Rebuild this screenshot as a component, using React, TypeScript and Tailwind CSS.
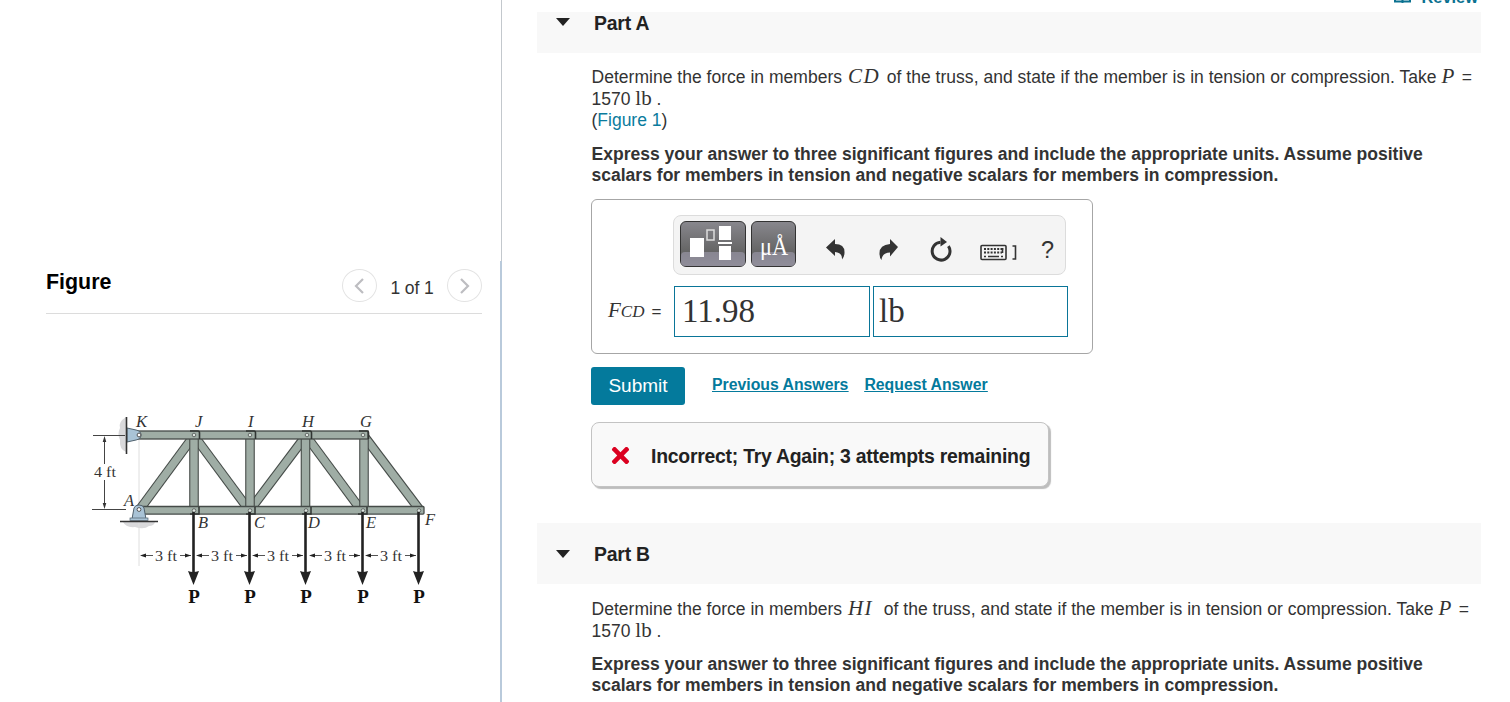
import type { ReactNode } from "react";
import { FaTimes } from "react-icons/fa";

const joints = [
  { x: 194, name: "B" },
  { x: 250, name: "C" },
  { x: 306, name: "D" },
  { x: 363, name: "E" },
  { x: 419, name: "F" },
];

const diagonals = [
  [140, 509, 193, 437],
  [195, 437, 249, 510],
  [250, 510, 305, 437],
  [307, 437, 361, 510],
  [364, 436, 419, 509],
];

const verticals = [194, 250, 305.5, 364];

function Beam({ x1, y1, x2, y2 }: { x1: number; y1: number; x2: number; y2: number }) {
  return (
    <g>
      <line x1={x1} y1={y1} x2={x2} y2={y2} stroke="#454b48" strokeWidth="9.6" />
      <line x1={x1} y1={y1} x2={x2} y2={y2} stroke="#9fada5" strokeWidth="7.4" />
    </g>
  );
}

function Truss() {
  return (
    <svg
      className="block h-[205px] w-[360px] font-['Liberation_Serif',serif]"
      viewBox="85 405 360 205"
    >
      {/* supports */}
      <path d="M126 417q-8 5-6 11-3 6 0 12-1 9 6 12z" fill="#d9d9db" />
      <path d="M123 522q3 6 12 5 9 3 14-1 5 0 6-4z" fill="#d9d9db" />
      <line x1="139" y1="440" x2="139" y2="566" stroke="#dedede" />

      {/* members */}
      {diagonals.map(([x1, y1, x2, y2]) => (
        <Beam key={x1} x1={x1} y1={y1} x2={x2} y2={y2} />
      ))}
      {verticals.map((x) => (
        <Beam key={x} x1={x} y1={436} x2={x} y2={508} />
      ))}
      <rect x="138" y="431" width="230" height="8" fill="#9fada5" stroke="#454b48" strokeWidth="1.3" />
      <rect x="138" y="506.5" width="286" height="7.6" rx="1" fill="#9fada5" stroke="#454b48" strokeWidth="1.3" />
      {[199, 255, 311, 368].map((x) => (
        <path key={x} d={`M${x - 9} 431h8q1.500 0 1.500 2v6`} fill="none" stroke="#303532" strokeWidth="1.600" />
      ))}
      {[199, 255, 311, 367].map((x) => (
        <path key={x} d={`M${x} 507v7h-9`} fill="none" stroke="#303532" strokeWidth="1.500" />
      ))}
      {[194, 250, 307, 363].map((x) => (
        <circle key={x} cx={x} cy="435" r="1.800" fill="#dfe5e1" stroke="#59605c" strokeWidth=".9" />
      ))}
      {joints.map((j) => (
        <circle key={j.name} cx={j.x} cy="510.5" r="1.800" fill="#dfe5e1" stroke="#59605c" strokeWidth=".9" />
      ))}

      <path d="M127 428l9 2q5 1 5 5t-5 5l-9 2z" fill="#a9c3d6" stroke="#51626e" />
      <line x1="126.500" y1="417" x2="126.500" y2="454" stroke="#333" strokeWidth="1.600" />
      <circle cx="139" cy="435" r="1.900" fill="#fff" stroke="#444" strokeWidth=".9" />
      <path d="M132 519l2-11q1-3 5-3t5 3l2 11z" fill="#a9c3d6" stroke="#51626e" />
      <rect x="130" y="518" width="18" height="2.500" fill="#a9c3d6" stroke="#51626e" strokeWidth=".7" />
      <line x1="120" y1="521.500" x2="158" y2="521.500" stroke="#333" strokeWidth="1.500" />
      <circle cx="139" cy="509.500" r="1.900" fill="#fff" stroke="#444" strokeWidth=".9" />

      {/* height dimension */}
      <path d="M93 435.500h32M92 509.500h34" stroke="#444" fill="none" />
      <path d="M104.500 438v26M104.500 480v27" stroke="#444" fill="none" />
      <path d="M104.500 436l-1.800 6h3.600zM104.500 509l-1.800-6h3.600z" fill="#333" />
      <text x="94" y="477" fontSize="14.500" fill="#333" textLength="22" lengthAdjust="spacingAndGlyphs">
        4 ft
      </text>

      {/* loads */}
      {joints.map((j, i) => (
        <g key={j.name}>
          <line x1={j.x - 0.5} y1="512" x2={j.x - 0.5} y2="576" stroke="#222" strokeWidth="2.600" />
          <path d={`M${j.x - 6} 571q5 2 11 0l-5.500 14z`} fill="#222" />
          <text x={j.x} y="603" fontSize="19" fontWeight="bold" textAnchor="middle" fill="#111">
            P
          </text>
          <path d={`M${j.x - 52} 555.500h11M${j.x - 14} 555.500h11`} stroke="#555" />
          <path
            d={`M${j.x - 54} 555.500l6-2v4zM${j.x - 3} 555.500l-6-2v4z`}
            fill="#222"
          />
          <text x={i === 0 ? 155 : j.x - 39} y="561" fontSize="15.500" fill="#333" textLength="22" lengthAdjust="spacingAndGlyphs">
            3 ft
          </text>
        </g>
      ))}

      {/* joint names */}
      <g fontSize="16.500" fontStyle="italic" fill="#333">
        <text x="136" y="427">K</text>
        <text x="195" y="427">J</text>
        <text x="248" y="427">I</text>
        <text x="302" y="427">H</text>
        <text x="360" y="427">G</text>
        <text x="124" y="506">A</text>
        <text x="198" y="528">B</text>
        <text x="254" y="528">C</text>
        <text x="308" y="528">D</text>
        <text x="366" y="528">E</text>
        <text x="425" y="525">F</text>
      </g>
    </svg>
  );
}

function PageButton({ next }: { next?: boolean }) {
  return (
    <button className="flex h-[33px] w-[35px] items-center justify-center rounded-[50%] border border-[#e3e3e3]">
      <svg className="h-4 w-3" viewBox="0 0 12 16" fill="none" stroke="#bdbdc1" strokeWidth="2.200">
        <path d={next ? "M2 1l7 7-7 7" : "M9 1L2 8l7 7"} />
      </svg>
    </button>
  );
}

function Var({ children }: { children: ReactNode }) {
  return (
    <span className="font-['Liberation_Serif',serif] text-[21px] leading-none tracking-[1.500px] italic">
      {children}
    </span>
  );
}

function PartTitle({ children }: { children: ReactNode }) {
  return (
    <>
      <svg className="mr-6 h-2 w-[14px]" viewBox="0 0 14 8">
        <path d="M0 0h14L7 8z" fill="#222" />
      </svg>
      <h2 className="pt-px text-[19.400px] leading-6 font-bold tracking-[-0.200px] text-[#222]">{children}</h2>
    </>
  );
}

function Question({ member, memberClass }: { member: string; memberClass: string }) {
  return (
    <>
      <div className="flex h-[22px] items-baseline text-[17.500px] leading-[22px] tracking-[0.020px] whitespace-pre">
        <span>Determine the force in members </span>
        <span className={memberClass}>
          <Var>{member}</Var>
        </span>
        <span> of the truss, and state if the member is in tension or compression. Take </span>
        <Var>P</Var>
        <span className="pl-px"> =</span>
      </div>
      <div className="h-[21px] text-[17.500px] leading-[21px]">
        1570 <span className="font-['Liberation_Serif',serif] text-[21px] leading-none">lb</span> .
      </div>
    </>
  );
}

function Instructions() {
  return (
    <p className="text-[17.540px] leading-[21px] font-bold whitespace-nowrap">
      Express your answer to three significant figures and include the appropriate units. Assume positive
      <br />
      scalars for members in tension and negative scalars for members in compression.
    </p>
  );
}

function Toolbar() {
  return (
    <div className="ml-[-1px] flex h-[60px] w-[393px] rounded-lg border border-[#dcdcdc] bg-[#f4f4f4] pt-[5px] pl-1.5">
      <button className="h-[46px] w-[66px] rounded-md border border-[#333] bg-linear-to-b from-[#88878d] from-0% via-[#656565] via-67% to-[#88878d] to-100%">
        <svg className="h-11 w-16" viewBox="0 0 64 44">
          <rect width="64" height="14" y="30" rx="4" fill="#918f9c" fillOpacity=".8" />
          <rect x="9" y="16" width="14" height="19" fill="#fff" />
          <rect x="26" y="8" width="7" height="10" fill="none" stroke="#ddd" strokeWidth="1.500" />
          <path d="M38 4h12v14H38zM37 20h14v2H37zM38 24h12v14H38z" fill="#fff" />
        </svg>
      </button>
      <button className="ml-[5px] h-[46px] w-[45px] rounded-md border border-[#333] bg-linear-to-b from-[#88878d] from-0% via-[#656565] via-67% to-[#88878d] to-100%">
        <svg className="h-11 w-[43px] font-['Liberation_Serif',serif]" viewBox="0 0 43 44">
          <rect width="43" height="14" y="30" rx="4" fill="#918f9c" fillOpacity=".8" />
          <text x="8" y="33" fontSize="25" fill="#fff" textLength="28" lengthAdjust="spacingAndGlyphs">
            μÅ
          </text>
        </svg>
      </button>
      <svg className="h-[46px] w-[260px] font-['Liberation_Sans',sans-serif]" viewBox="796 221 260 46">
        <path d="M826 247.500l9-8.500v5q10 0 9.500 9-.2 4-2.500 6.500.5-7-7-7.500v4z" fill="#333" />
        <path d="M898 247l-8-8v5q-11 1-10.500 10 .1 4 2 6 .5-7 8.500-7.500v4z" fill="#333" />
        <path d="M940.500 242.300a8.900 8.900 0 1 0 7.900 3.800" fill="none" stroke="#333" strokeWidth="3" />
        <path d="M940.500 237l6.500 5-6.500 4.500z" fill="#333" />
        <rect x="981" y="245.500" width="25" height="14" rx="1" fill="none" stroke="#333" strokeWidth="1.600" />
        <path
          d="M984 249h20M984 252.500h18"
          fill="none"
          stroke="#333"
          strokeWidth="1.800"
          strokeDasharray="2 1.300"
        />
        <path d="M984 256.500h2M988 256.500h11M1001 256.500h2M1002.500 248v5" stroke="#333" strokeWidth="1.600" />
        <path d="M1012.500 246h3v13h-3" fill="none" stroke="#333" strokeWidth="1.600" />
        <text x="1041" y="257.500" fontSize="23.500" fill="#333">
          ?
        </text>
      </svg>
    </div>
  );
}

function AnswerBox() {
  return (
    <div className="mt-[13px] ml-[-0.500px] flex h-[155px] w-[502px] rounded-md border border-[#a6a6a6]">
      <div className="flex w-[82px] items-baseline pt-[95px] pl-4 font-['Liberation_Serif',serif] text-[#333]">
        <span className="text-[21px] italic">F</span>
        <span className="pt-0.5 text-[17px] italic">CD</span>
        <span className="ml-[7px] font-['Liberation_Sans',sans-serif] text-[17px]">=</span>
      </div>
      <div className="pt-[15px]">
        <Toolbar />
        <div className="mt-[11px] flex gap-[3px] font-['Liberation_Serif',serif] text-[33px] leading-[49px] text-[#333]">
          <div className="h-[51px] w-[196px] border border-[#0a7598] pl-[7px]">11.98</div>
          <div className="h-[51px] w-[195px] border border-[#0a7598] pl-[5px]">lb</div>
        </div>
      </div>
    </div>
  );
}

export default function App() {
  return (
    <div className="flex h-[702px] w-[1510px] overflow-hidden bg-white font-['Liberation_Sans',sans-serif] text-[#333]">
      {/* FIGURE */}
      <aside className="flex w-[502px] flex-col">
        <div className="h-[261px] border-r border-[#c3c8cd]" />
        <div className="flex-1 border-r-2 border-[#b9cadb]">
          <div className="ml-[46px] flex h-[53px] w-[436px] border-b border-[#dcdcdc]">
            <h1 className="pt-[7px] text-[21.400px] leading-7 font-bold text-black">Figure</h1>
            <div className="ml-auto flex pt-2">
              <PageButton />
              <span className="w-[70px] pt-[7px] text-center text-[17.500px] leading-6 tracking-[-0.100px]">1 of 1</span>
              <PageButton next />
            </div>
          </div>
          <div className="mt-[91px] ml-[85px]">
            <Truss />
          </div>
        </div>
      </aside>

      {/* QUESTIONS */}
      <main className="ml-[35px] w-[944px]">
        <div className="flex h-3 justify-end text-[16.400px] leading-5 font-bold text-[#0a7190]">
          <div className="mt-[-13px] flex h-5 pr-[3px]">
            <svg className="mr-[11px] h-4 w-[17px]" viewBox="0 0 17 16" fill="none" stroke="currentColor" strokeWidth="2">
              <path d="M0 14.500h7l1.500.5 1.500-.5h7M1 14V3h6l1.500 1L10 3h6v11M8.500 4v11" />
            </svg>
            <span>Review</span>
          </div>
        </div>

        <div className="flex h-[41px] items-center bg-[#f8f8f8] pb-[21px] pl-[19px]">
          <PartTitle>Part A</PartTitle>
        </div>
        <section className="pt-[13px] pl-[54.500px]">
          <Question member="CD" memberClass="w-[35px] pl-px" />
          <div className="h-[22px] text-[17.500px] leading-[22px]">
            (<a className="text-[#0a7b9d]">Figure 1</a>)
          </div>
          <div className="mt-[13px]">
            <Instructions />
          </div>
          <AnswerBox />
          <div className="mt-[13px] ml-[-0.500px] flex h-[38px]">
            <button className="h-[38px] w-[94px] rounded-[3px] bg-[#047a9c] text-[19px] text-white">Submit</button>
            <div className="flex gap-4 pt-1.5 pl-[27px] text-[15.800px] leading-6 font-bold text-[#047a9c] underline">
              <a>Previous Answers</a>
              <a>Request Answer</a>
            </div>
          </div>
          <div className="mt-[17px] ml-[-0.500px] flex h-[65px] w-[458px] items-center rounded-lg border border-[#c3c3c3] bg-[#f9f9f9] pt-0.5 pl-[17px] shadow-[2px_2px_1px_#bdbdbd]">
            <FaTimes className="mr-[18px] size-[25px] -ml-px text-[#db0020]" />
            <span className="pt-0.5 text-[19.400px] font-bold tracking-[-0.240px] whitespace-nowrap text-[#222]">
              Incorrect; Try Again; 3 attempts remaining
            </span>
          </div>
        </section>

        <div className="mt-9 flex h-[61px] items-center bg-[#f8f8f8] pl-[19px]">
          <PartTitle>Part B</PartTitle>
        </div>
        <section className="pt-[14px] pl-[54.500px]">
          <Question member="HI" memberClass="w-[32px] pl-px" />
          <div className="mt-[13px]">
            <Instructions />
          </div>
        </section>
      </main>
    </div>
  );
}
